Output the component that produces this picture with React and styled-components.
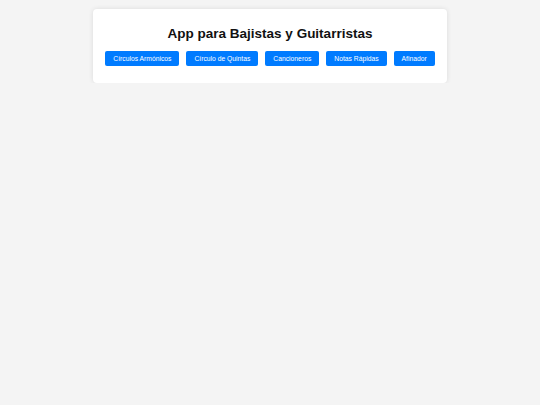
import React from 'react';
import styled, { createGlobalStyle } from 'styled-components';

const GlobalStyle = createGlobalStyle`
  html, body {
    margin: 0;
    padding: 0;
    background: #f4f4f4;
    font-family: "Liberation Sans", Arial, sans-serif;
  }
`;

const Card = styled.div`
  box-sizing: border-box;
  width: 354px;
  margin: 9px auto 0;
  padding: 12px 12px 17px;
  background: #ffffff;
  border-radius: 4px;
  box-shadow: 0 0 5px rgba(0, 0, 0, 0.1);
`;

const Title = styled.h1`
  margin: 5px 0 9px;
  font-size: 13.5px;
  line-height: 16px;
  font-weight: bold;
  color: #111;
  text-align: center;
`;

const Nav = styled.div`
  display: flex;
  justify-content: center;
  gap: 7px;
`;

const NavButton = styled.button`
  height: 15px;
  padding: 0 8px;
  border: none;
  border-radius: 2px;
  background: #007bff;
  color: #fff;
  font-family: "Liberation Sans", Arial, sans-serif;
  font-size: 6.75px;
  line-height: 15px;
  white-space: nowrap;
  cursor: pointer;
`;

const sections = ['Círculos Armónicos', 'Círculo de Quintas', 'Cancioneros', 'Notas Rápidas', 'Afinador'];

export default function App() {
  return (
    <>
      <GlobalStyle />
      <Card>
        <Title>App para Bajistas y Guitarristas</Title>
        <Nav>
          {sections.map(s => (
            <NavButton key={s}>{s}</NavButton>
          ))}
        </Nav>
      </Card>
    </>
  );
}
